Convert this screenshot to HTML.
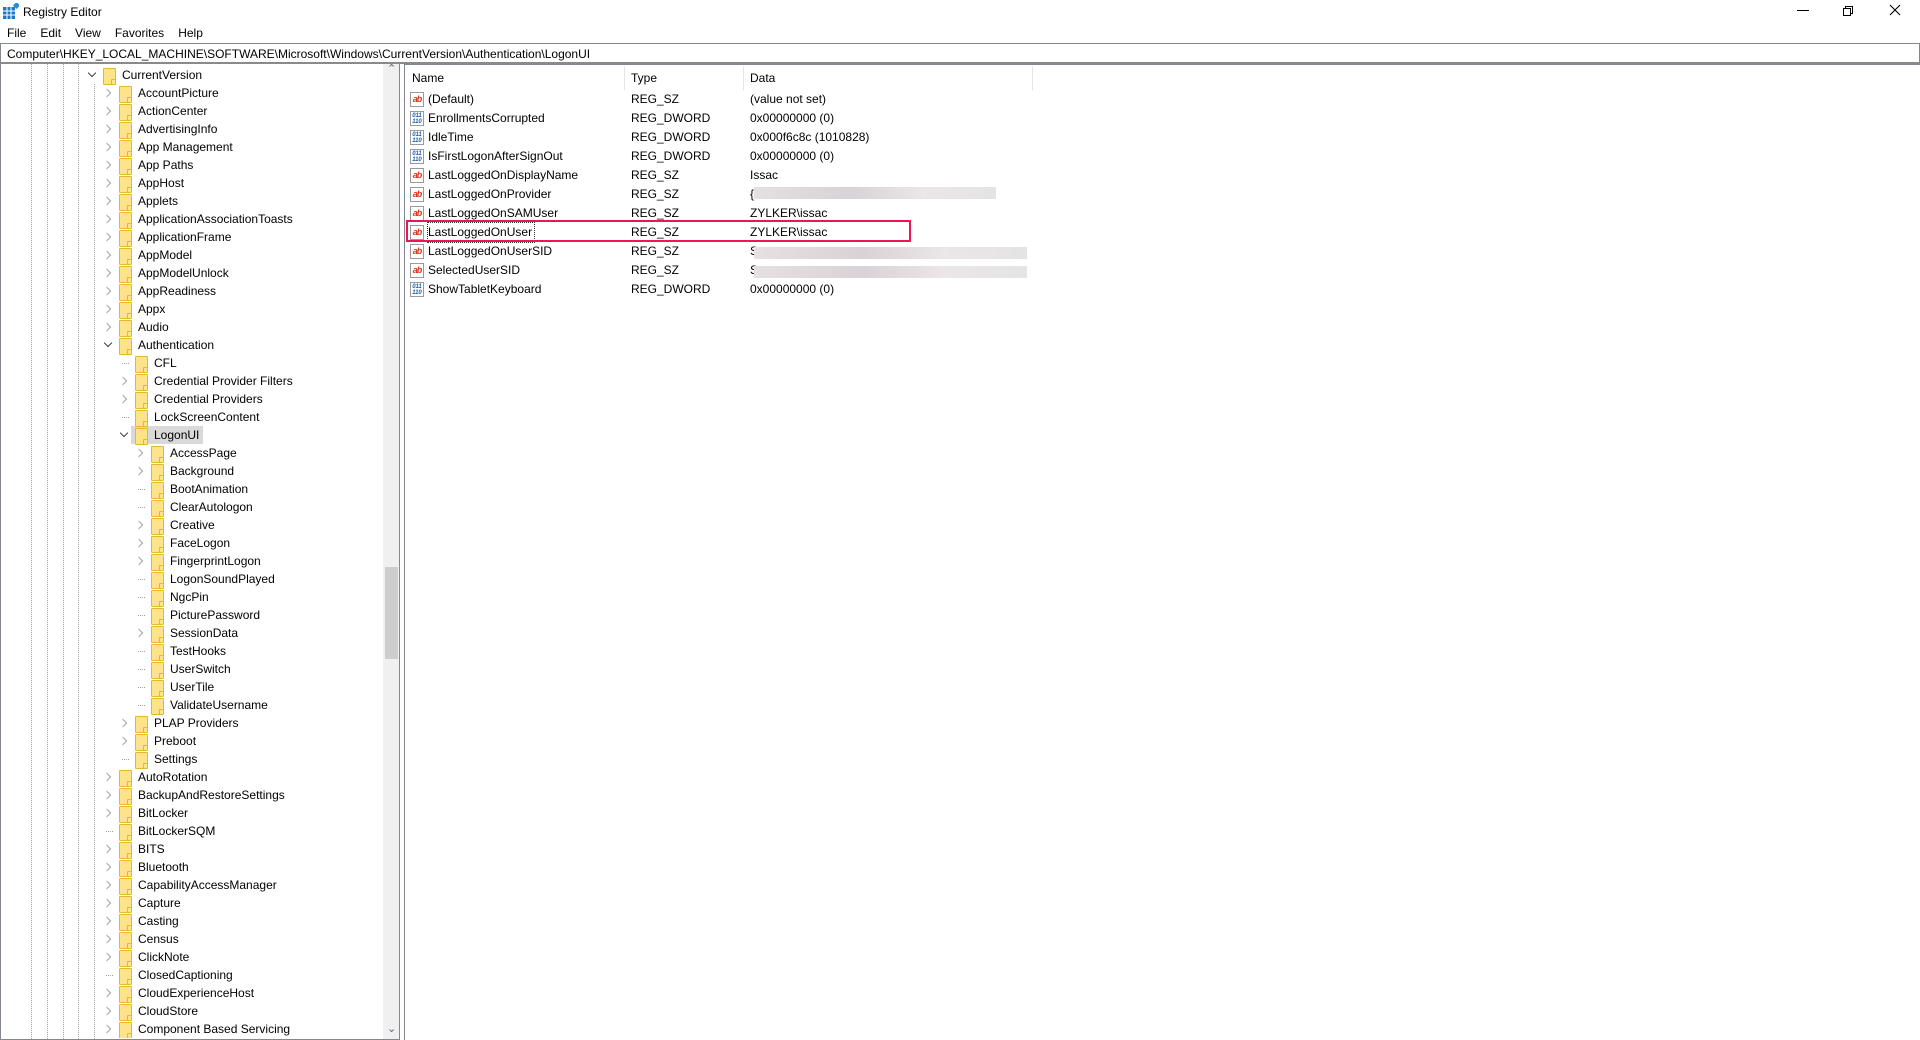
<!DOCTYPE html>
<html><head><meta charset="utf-8"><style>
*{margin:0;padding:0;box-sizing:border-box}
html,body{width:1920px;height:1040px;overflow:hidden}
body{background:#fff;font-family:"Liberation Sans",sans-serif;font-size:12px;color:#000;position:relative}
.a{position:absolute;white-space:nowrap}
.menu span{margin-right:14px}
.tree{position:absolute;left:0;top:64px;width:400px;height:976px;border:1px solid #828790;border-top:none;overflow:hidden}
.vl{position:absolute;top:0;bottom:0;border-left:1px dotted #a0a0a0;width:0}
#tr{position:absolute;left:0;top:0;width:382px;height:1038px;overflow:hidden}
.r{position:absolute;height:18px;line-height:18px;white-space:nowrap;width:300px}
.r .c{position:absolute;left:-1px;top:0;width:12px;height:18px}
.r .c:before{content:"";position:absolute;left:2px;top:6px;width:5px;height:5px;border-right:1.5px solid #a6a6a6;border-bottom:1.5px solid #a6a6a6;transform:rotate(-45deg)}
.r.e .c:before{left:3px;top:4px;border-color:#404040;transform:rotate(45deg)}
.r.n .c:before{left:4px;top:9px;width:7px;height:0;border:none;border-top:1px dotted #a0a0a0;transform:none}
.f{position:absolute;left:16px;top:2px;width:13px;height:17px;background:#ffe38a;border:1px solid #e8b730;border-radius:1px;z-index:2}
.f:after{content:"";position:absolute;right:-1px;bottom:-1px;width:4px;height:5px;border-left:1px solid #e8b730;border-top:1px solid #e8b730}
.r .t{position:absolute;left:35px;top:0}
.hl{position:absolute;left:12px;top:0;width:72px;height:18px;background:#d9d9d9}
.lst{position:absolute;left:404px;top:64px;width:1516px;height:976px;border-left:1px solid #828790;border-top:1px solid #828790}
.h{position:absolute;top:78px;transform:translateY(-50%)}
.lr{position:absolute;left:410px;height:19px;line-height:19px;width:600px;white-space:nowrap}
.lr .i{position:absolute;left:0;top:2px;width:14px;height:15px;border:1px solid #9a9a9a;background:#fff;font-size:9px;line-height:12px;font-weight:bold;text-align:center;overflow:hidden}
.sz .i{color:#e0331a;letter-spacing:-1px}
.dw .i{color:#1a5fb4;font-size:6px;line-height:6px;padding-top:1px;letter-spacing:0}
.lr .n{position:absolute;left:18px}
.lr .ty{position:absolute;left:221px}
.lr .d{position:absolute;left:340px}
.blur{position:absolute;height:12px;background:linear-gradient(90deg,#e6e0e2,#d9d2d6 40%,#ebe6e8 70%,#e4e4e4)}
</style></head><body>
<svg class="a" style="left:3px;top:3px" width="16" height="16" viewBox="0 0 16 16"><rect x="0" y="4" width="12" height="12" fill="#1e78c8"/><g stroke="#fff" stroke-width="1"><line x1="4" y1="4" x2="4" y2="16"/><line x1="8" y1="4" x2="8" y2="16"/><line x1="0" y1="8" x2="12" y2="8"/><line x1="0" y1="12" x2="12" y2="12"/></g><rect x="11" y="0" width="5" height="5" fill="#2a8ad8" transform="rotate(45 13.5 2.5)"/></svg>
<div class="a" style="left:23px;top:5px;font-size:12px">Registry Editor</div>
<div class="a" style="left:1797px;top:10px;width:12px;height:1px;background:#000"></div>
<div class="a" style="left:1845px;top:6px;width:8px;height:8px;border:1px solid #000;background:#fff"></div>
<div class="a" style="left:1843px;top:8px;width:8px;height:8px;border:1px solid #000;background:#fff"></div>
<svg class="a" style="left:1889px;top:4px" width="12" height="12"><path d="M1 1L11 11M11 1L1 11" stroke="#000" stroke-width="1.1"/></svg>
<div class="a menu" style="left:7px;top:26px"><span>File</span><span>Edit</span><span>View</span><span>Favorites</span><span>Help</span></div>
<div class="a" style="left:0;top:43px;width:1920px;height:21px;border:1px solid #828790;border-bottom:2px solid #8a8a8a;padding:3px 0 0 6px">Computer\HKEY_LOCAL_MACHINE\SOFTWARE\Microsoft\Windows\CurrentVersion\Authentication\LogonUI</div>

<div class="tree">
<div class="vl" style="left:30px"></div><div class="vl" style="left:46px"></div><div class="vl" style="left:62px"></div><div class="vl" style="left:77px"></div>
<div class="vl" style="left:93px;top:20px"></div>
<div style="position:absolute;left:382px;top:0;width:17px;height:976px;background:#f0f0f0"></div>
<div style="position:absolute;left:384px;top:503px;width:13px;height:92px;background:#cdcdcd"></div>
<div style="position:absolute;left:386px;top:-2px;color:#606060;font-size:11px">&#8963;</div>
<div style="position:absolute;left:386px;top:958px;color:#606060;font-size:11px">&#8964;</div>
</div>
<div id="tr">
<div class="r e" style="left:87px;top:66px"><i class="c"></i><i class="f"></i><span class="t">CurrentVersion</span></div>
<div class="r" style="left:103px;top:84px"><i class="c"></i><i class="f"></i><span class="t">AccountPicture</span></div>
<div class="r" style="left:103px;top:102px"><i class="c"></i><i class="f"></i><span class="t">ActionCenter</span></div>
<div class="r" style="left:103px;top:120px"><i class="c"></i><i class="f"></i><span class="t">AdvertisingInfo</span></div>
<div class="r" style="left:103px;top:138px"><i class="c"></i><i class="f"></i><span class="t">App Management</span></div>
<div class="r" style="left:103px;top:156px"><i class="c"></i><i class="f"></i><span class="t">App Paths</span></div>
<div class="r" style="left:103px;top:174px"><i class="c"></i><i class="f"></i><span class="t">AppHost</span></div>
<div class="r" style="left:103px;top:192px"><i class="c"></i><i class="f"></i><span class="t">Applets</span></div>
<div class="r" style="left:103px;top:210px"><i class="c"></i><i class="f"></i><span class="t">ApplicationAssociationToasts</span></div>
<div class="r" style="left:103px;top:228px"><i class="c"></i><i class="f"></i><span class="t">ApplicationFrame</span></div>
<div class="r" style="left:103px;top:246px"><i class="c"></i><i class="f"></i><span class="t">AppModel</span></div>
<div class="r" style="left:103px;top:264px"><i class="c"></i><i class="f"></i><span class="t">AppModelUnlock</span></div>
<div class="r" style="left:103px;top:282px"><i class="c"></i><i class="f"></i><span class="t">AppReadiness</span></div>
<div class="r" style="left:103px;top:300px"><i class="c"></i><i class="f"></i><span class="t">Appx</span></div>
<div class="r" style="left:103px;top:318px"><i class="c"></i><i class="f"></i><span class="t">Audio</span></div>
<div class="r e" style="left:103px;top:336px"><i class="c"></i><i class="f"></i><span class="t">Authentication</span></div>
<div class="r n" style="left:119px;top:354px"><i class="c"></i><i class="f"></i><span class="t">CFL</span></div>
<div class="r" style="left:119px;top:372px"><i class="c"></i><i class="f"></i><span class="t">Credential Provider Filters</span></div>
<div class="r" style="left:119px;top:390px"><i class="c"></i><i class="f"></i><span class="t">Credential Providers</span></div>
<div class="r n" style="left:119px;top:408px"><i class="c"></i><i class="f"></i><span class="t">LockScreenContent</span></div>
<div class="r e" style="left:119px;top:426px"><i class="hl"></i><i class="c"></i><i class="f"></i><span class="t">LogonUI</span></div>
<div class="r" style="left:135px;top:444px"><i class="c"></i><i class="f"></i><span class="t">AccessPage</span></div>
<div class="r" style="left:135px;top:462px"><i class="c"></i><i class="f"></i><span class="t">Background</span></div>
<div class="r n" style="left:135px;top:480px"><i class="c"></i><i class="f"></i><span class="t">BootAnimation</span></div>
<div class="r n" style="left:135px;top:498px"><i class="c"></i><i class="f"></i><span class="t">ClearAutologon</span></div>
<div class="r" style="left:135px;top:516px"><i class="c"></i><i class="f"></i><span class="t">Creative</span></div>
<div class="r" style="left:135px;top:534px"><i class="c"></i><i class="f"></i><span class="t">FaceLogon</span></div>
<div class="r" style="left:135px;top:552px"><i class="c"></i><i class="f"></i><span class="t">FingerprintLogon</span></div>
<div class="r n" style="left:135px;top:570px"><i class="c"></i><i class="f"></i><span class="t">LogonSoundPlayed</span></div>
<div class="r n" style="left:135px;top:588px"><i class="c"></i><i class="f"></i><span class="t">NgcPin</span></div>
<div class="r n" style="left:135px;top:606px"><i class="c"></i><i class="f"></i><span class="t">PicturePassword</span></div>
<div class="r" style="left:135px;top:624px"><i class="c"></i><i class="f"></i><span class="t">SessionData</span></div>
<div class="r n" style="left:135px;top:642px"><i class="c"></i><i class="f"></i><span class="t">TestHooks</span></div>
<div class="r n" style="left:135px;top:660px"><i class="c"></i><i class="f"></i><span class="t">UserSwitch</span></div>
<div class="r n" style="left:135px;top:678px"><i class="c"></i><i class="f"></i><span class="t">UserTile</span></div>
<div class="r n" style="left:135px;top:696px"><i class="c"></i><i class="f"></i><span class="t">ValidateUsername</span></div>
<div class="r" style="left:119px;top:714px"><i class="c"></i><i class="f"></i><span class="t">PLAP Providers</span></div>
<div class="r" style="left:119px;top:732px"><i class="c"></i><i class="f"></i><span class="t">Preboot</span></div>
<div class="r n" style="left:119px;top:750px"><i class="c"></i><i class="f"></i><span class="t">Settings</span></div>
<div class="r" style="left:103px;top:768px"><i class="c"></i><i class="f"></i><span class="t">AutoRotation</span></div>
<div class="r" style="left:103px;top:786px"><i class="c"></i><i class="f"></i><span class="t">BackupAndRestoreSettings</span></div>
<div class="r" style="left:103px;top:804px"><i class="c"></i><i class="f"></i><span class="t">BitLocker</span></div>
<div class="r n" style="left:103px;top:822px"><i class="c"></i><i class="f"></i><span class="t">BitLockerSQM</span></div>
<div class="r" style="left:103px;top:840px"><i class="c"></i><i class="f"></i><span class="t">BITS</span></div>
<div class="r" style="left:103px;top:858px"><i class="c"></i><i class="f"></i><span class="t">Bluetooth</span></div>
<div class="r" style="left:103px;top:876px"><i class="c"></i><i class="f"></i><span class="t">CapabilityAccessManager</span></div>
<div class="r" style="left:103px;top:894px"><i class="c"></i><i class="f"></i><span class="t">Capture</span></div>
<div class="r" style="left:103px;top:912px"><i class="c"></i><i class="f"></i><span class="t">Casting</span></div>
<div class="r" style="left:103px;top:930px"><i class="c"></i><i class="f"></i><span class="t">Census</span></div>
<div class="r" style="left:103px;top:948px"><i class="c"></i><i class="f"></i><span class="t">ClickNote</span></div>
<div class="r n" style="left:103px;top:966px"><i class="c"></i><i class="f"></i><span class="t">ClosedCaptioning</span></div>
<div class="r" style="left:103px;top:984px"><i class="c"></i><i class="f"></i><span class="t">CloudExperienceHost</span></div>
<div class="r" style="left:103px;top:1002px"><i class="c"></i><i class="f"></i><span class="t">CloudStore</span></div>
<div class="r" style="left:103px;top:1020px"><i class="c"></i><i class="f"></i><span class="t">Component Based Servicing</span></div>
</div>

<div class="lst"></div>
<div class="a" style="left:624px;top:66px;width:1px;height:24px;background:#e5e5e5"></div>
<div class="a" style="left:743px;top:66px;width:1px;height:24px;background:#e5e5e5"></div>
<div class="a" style="left:1032px;top:66px;width:1px;height:24px;background:#e5e5e5"></div>
<div class="a h" style="left:412px">Name</div>
<div class="a h" style="left:631px">Type</div>
<div class="a h" style="left:750px">Data</div>

<div class="lr sz" style="top:90px"><i class="i">ab</i><span class="n">(Default)</span><span class="ty">REG_SZ</span><span class="d">(value not set)</span></div>
<div class="lr dw" style="top:109px"><i class="i">011<br>110</i><span class="n">EnrollmentsCorrupted</span><span class="ty">REG_DWORD</span><span class="d">0x00000000 (0)</span></div>
<div class="lr dw" style="top:128px"><i class="i">011<br>110</i><span class="n">IdleTime</span><span class="ty">REG_DWORD</span><span class="d">0x000f6c8c (1010828)</span></div>
<div class="lr dw" style="top:147px"><i class="i">011<br>110</i><span class="n">IsFirstLogonAfterSignOut</span><span class="ty">REG_DWORD</span><span class="d">0x00000000 (0)</span></div>
<div class="lr sz" style="top:166px"><i class="i">ab</i><span class="n">LastLoggedOnDisplayName</span><span class="ty">REG_SZ</span><span class="d">Issac</span></div>
<div class="lr sz" style="top:185px"><i class="i">ab</i><span class="n">LastLoggedOnProvider</span><span class="ty">REG_SZ</span><span class="d">{</span></div>
<div class="lr sz" style="top:204px"><i class="i">ab</i><span class="n">LastLoggedOnSAMUser</span><span class="ty">REG_SZ</span><span class="d">ZYLKER\issac</span></div>
<div class="lr sz" style="top:223px"><i class="i">ab</i><span class="n" style="outline:1px dotted #333;padding-right:2px">LastLoggedOnUser</span><span class="ty">REG_SZ</span><span class="d">ZYLKER\issac</span></div>
<div class="lr sz" style="top:242px"><i class="i">ab</i><span class="n">LastLoggedOnUserSID</span><span class="ty">REG_SZ</span><span class="d">S</span></div>
<div class="lr sz" style="top:261px"><i class="i">ab</i><span class="n">SelectedUserSID</span><span class="ty">REG_SZ</span><span class="d">S</span></div>
<div class="lr dw" style="top:280px"><i class="i">011<br>110</i><span class="n">ShowTabletKeyboard</span><span class="ty">REG_DWORD</span><span class="d">0x00000000 (0)</span></div>
<div class="blur" style="left:754px;top:187px;width:242px"></div>
<div class="blur" style="left:754px;top:247px;width:273px"></div>
<div class="blur" style="left:754px;top:266px;width:273px"></div>
<div class="a" style="left:406px;top:220px;width:505px;height:22px;border:2.5px solid #ef1456"></div>
</body></html>
